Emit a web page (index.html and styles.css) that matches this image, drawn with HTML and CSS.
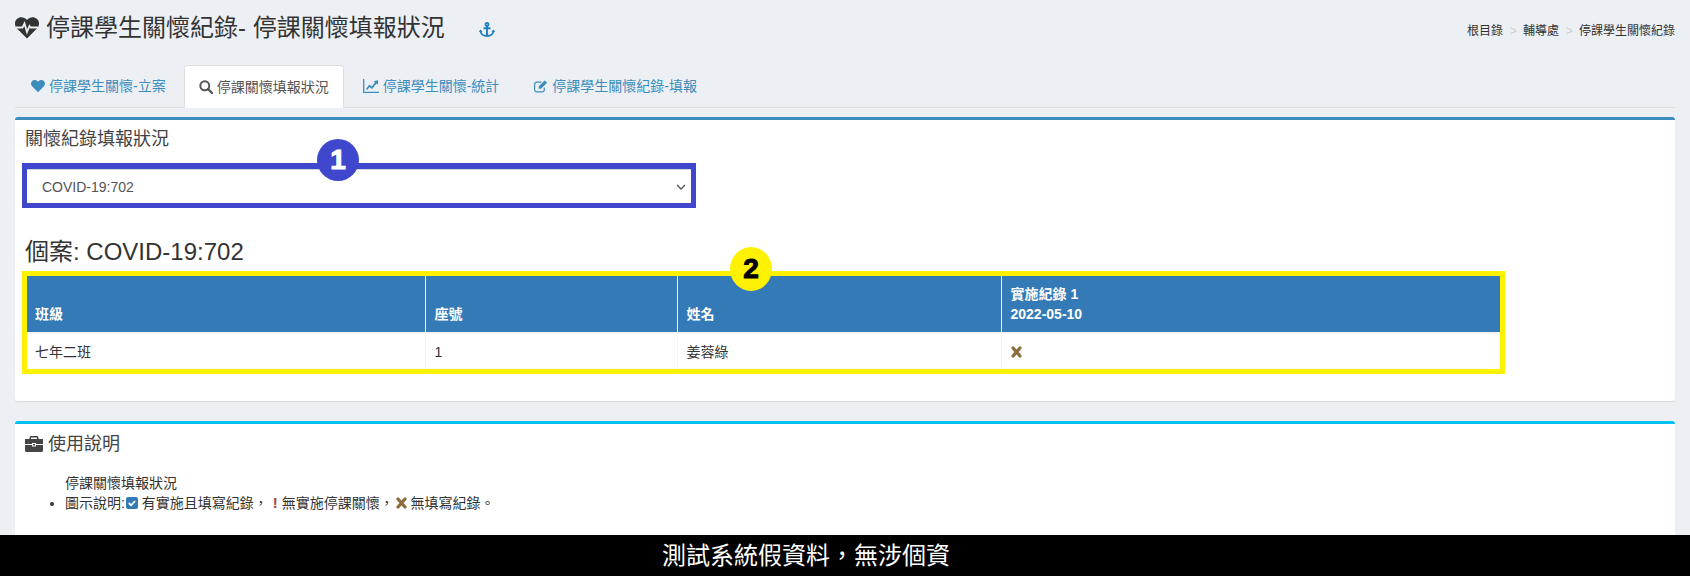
FILE: index.html
```html
<!DOCTYPE html>
<html lang="zh-Hant">
<head>
	<title>停課學生關懷紀錄</title>
	<link rel="stylesheet" href="styles.css">
</head>
<body>
	<div class="main">
		<div class="page-head">
			<h1 class="page-title">
				<svg class="icon-heartbeat" viewBox="0 0 24 22"><path fill="#333" d="M12 21.500 1.800 11.200C-.8 8.300-.5 4 2 1.900 4.700-.5 9.300-.3 12 3.100 14.700-.3 19.300-.5 22 1.900c2.500 2.100 2.800 6.400.2 9.300z"/><path fill="none" stroke="#ecf0f5" stroke-width="1.800" d="M1 10.500h6.500l2-4 2.500 8.500 2.500-6 1.200 1.500H23"/></svg>
				<span>停課學生關懷紀錄- 停課關懷填報狀況</span>
				<svg class="icon-anchor" viewBox="0 0 16 16"><g fill="none" stroke="#1f7fbd" stroke-width="1.900"><circle cx="8" cy="2.500" r="1.500"/><path d="M8 4v10.500M4.500 6.300h7M1.500 8.500c0 3.500 3 5.500 6.500 5.500s6.500-2 6.500-5.500"/></g><path fill="#1f7fbd" d="M0 10l1.500-2.500L3.500 10zM12.500 10l2-2.500L16 10z"/></svg>
			</h1>
			<ol class="crumbs">
				<li>根目錄</li>
				<li class="sep">&gt;</li>
				<li>輔導處</li>
				<li class="sep">&gt;</li>
				<li>停課學生關懷紀錄</li>
			</ol>
		</div>

		<ul class="tabs">
			<li class="tab">
				<svg class="tab-icon" viewBox="0 0 16 14"><path fill="currentColor" d="M8 14 1.200 7.300C-.5 5.400-.3 2.600 1.300 1.200 3.100-.4 6.200-.2 8 2 9.800-.2 12.900-.4 14.700 1.200c1.600 1.400 1.800 4.200.1 6.100z"/></svg>
				<span>停課學生關懷-立案</span>
			</li>
			<li class="tab active">
				<svg class="tab-icon" viewBox="0 0 14 14"><circle cx="5.800" cy="5.800" r="4.500" fill="none" stroke="currentColor" stroke-width="2"/><path d="M9 9l4 4" stroke="currentColor" stroke-width="2.400" stroke-linecap="round"/></svg>
				<span>停課關懷填報狀況</span>
			</li>
			<li class="tab">
				<svg class="tab-icon wide" viewBox="0 0 16 14"><path fill="none" stroke="currentColor" stroke-width="1.300" d="M.7 0v13.300H16"/><path fill="currentColor" d="M3 10l3.300-4.500 2.500 2 3.200-4-1.400-1.200 4.400-1v4.500l-1.400-1.200-4.600 5.400-2.500-2-2.200 3z"/></svg>
				<span>停課學生關懷-統計</span>
			</li>
			<li class="tab">
				<svg class="tab-icon" viewBox="0 0 15 14"><path fill="none" stroke="currentColor" stroke-width="1.300" d="M11 8.500v2.500a2.300 2.300 0 0 1-2.300 2.300H3A2.300 2.300 0 0 1 .7 11V5.200A2.300 2.300 0 0 1 3 2.900h5"/><path fill="currentColor" d="M5 7.500 11.500 1l2.500 2.500L7.500 10H5z"/></svg>
				<span>停課學生關懷紀錄-填報</span>
			</li>
		</ul>

		<section class="box box-primary">
			<h3 class="box-title">關懷紀錄填報狀況</h3>
			<div class="mark-blue">
				<select class="case-select">
					<option>COVID-19:702</option>
				</select>
				<svg class="select-arrow" viewBox="0 0 10 6"><path d="M1 1l4 4 4-4" fill="none" stroke="#555" stroke-width="1.300"/></svg>
				<span class="badge badge-blue">1</span>
			</div>
			<h3 class="case-title">個案: COVID-19:702</h3>
			<div class="mark-yellow">
				<table class="case-table">
					<colgroup>
						<col class="col-class">
						<col class="col-seat">
						<col class="col-name">
						<col>
					</colgroup>
					<thead>
						<tr>
							<th>班級</th>
							<th>座號</th>
							<th>姓名</th>
							<th>實施紀錄 1<br>2022-05-10</th>
						</tr>
					</thead>
					<tbody>
						<tr>
							<td>七年二班</td>
							<td>1</td>
							<td>姜蓉綠</td>
							<td><svg class="icon-times" viewBox="0 0 11 12"><path d="M2 2l7 8M9 2l-7 8" stroke="#8a6d3b" stroke-width="3.200" stroke-linecap="round"/></svg></td>
						</tr>
					</tbody>
				</table>
				<span class="badge badge-yellow">2</span>
			</div>
		</section>

		<section class="box box-info">
			<h3 class="box-title title-info">
				<svg class="icon-briefcase" viewBox="0 0 18 16"><path fill="#444" d="M6 0h6a1.500 1.500 0 0 1 1.500 1.500V3H18v5H11V7H7v1H0V3h4.500V1.500A1.500 1.500 0 0 1 6 0zm0 1.500V3h6V1.500zM0 9h7v1.500h4V9h7v5.500a1.500 1.500 0 0 1-1.500 1.500h-15A1.500 1.500 0 0 1 0 14.500z"/><path fill="#444" d="M8 8h2v1.500H8z"/></svg>
				使用說明
			</h3>
			<ul class="help-list">
				<li class="help-head">停課關懷填報狀況</li>
				<li>圖示說明:<svg class="icon-check" viewBox="0 0 12 12"><rect width="12" height="12" rx="2" fill="#337ab7"/><path d="M2.800 6l2.300 2.300 4-4.300" fill="none" stroke="#fff" stroke-width="1.800"/></svg> 有實施且填寫紀錄，<b class="mark-bang">!</b> 無實施停課關懷， <svg class="icon-times help-times" viewBox="0 0 11 12"><path d="M2 2l7 8M9 2l-7 8" stroke="#8a6d3b" stroke-width="3.200" stroke-linecap="round"/></svg> 無填寫紀錄。</li>
			</ul>
		</section>
	</div>
	<div class="notice">測試系統假資料，無涉個資</div>
</body>
</html>
```

FILE: styles.css
```css
* {
	box-sizing: border-box;
}
html, body {
	height: 100%;
	margin: 0;
}
body {
	display: flex;
	flex-direction: column;
	overflow: hidden;
	background-color: #ecf0f5;
	color: #333;
	font-family: "Liberation Sans", "Noto Sans CJK TC", sans-serif;
	font-size: 14px;
	line-height: 20px;
}
.main {
	flex: 1;
	min-height: 0;
	overflow: hidden;
	padding: 0 15px;
}

/* en-tete */
.page-head {
	display: flex;
	justify-content: space-between;
	height: 65px;
}
.page-title {
	display: flex;
	align-items: center;
	height: 30px;
	margin: 13px 0 0;
	font-size: 24px;
	font-weight: 400;
}
.icon-heartbeat {
	width: 24px;
	height: 22px;
	margin-right: 7px;
}
.icon-anchor {
	width: 16px;
	height: 16px;
	margin: 4px 0 0 34px;
}
.crumbs {
	display: flex;
	margin: 21px 0 0;
	padding: 0;
	list-style: none;
	font-size: 12px;
}
.crumbs .sep {
	padding: 0 6px 0 7px;
	color: #ccc;
}

/* onglets */
.tabs {
	display: flex;
	gap: 4px;
	height: 43px;
	margin: 0 0 9px;
	padding: 0 0 0 1px;
	border-bottom: 1px solid #ddd;
	list-style: none;
}
.tab {
	display: flex;
	align-items: center;
	height: 42px;
	padding: 0 15px;
	color: #3c8dbc;
}
.tab.active {
	height: 43px;
	margin-left: -1px;
	padding: 0 14px;
	border: 1px solid #ddd;
	border-bottom-color: #fff;
	border-radius: 4px 4px 0 0;
	background-color: #fff;
	color: #555;
}
.tab:last-child {
	margin-left: 1px;
}
.tab-icon {
	width: 14px;
	height: 14px;
	margin-right: 4px;
}
.tab-icon.wide {
	width: 16px;
}

/* boites */
.box {
	border-top: 3px solid #3c8dbc;
	border-radius: 3px;
	background-color: #fff;
	box-shadow: 0 1px 1px rgba(0, 0, 0, 0.1);
}
.box-primary {
	height: 284px;
	margin-bottom: 20px;
}
.box-info {
	height: 200px;
	border-top-color: #00c0ef;
}
.box-title {
	display: flex;
	align-items: center;
	margin: 0;
	padding: 10px 10px 9px;
	color: #444;
	font-size: 18px;
	font-weight: 400;
	line-height: 18px;
}
.title-info {
	padding-top: 11px;
}
.mark-blue {
	position: relative;
	width: 674px;
	height: 45px;
	margin: 6px 0 0 7px;
	border: 5px solid #3f48cc;
	border-top-width: 6px;
}
.case-select {
	display: block;
	width: 100%;
	height: 100%;
	padding: 0 15px;
	border: 0;
	border-top: 1px solid #d2d6de;
	border-radius: 0;
	background-color: #fff;
	color: #555;
	font-family: inherit;
	font-size: 14px;
	appearance: none;
}
.select-arrow {
	position: absolute;
	top: 15px;
	right: 5px;
	width: 10px;
	height: 6px;
}
.badge {
	position: absolute;
	display: flex;
	align-items: center;
	justify-content: center;
	width: 42px;
	height: 42px;
	border-radius: 50%;
	font-size: 28px;
	font-weight: 700;
	-webkit-text-stroke: 1px currentColor;
}
.badge-blue {
	top: -30px;
	left: 290px;
	background-color: #3f48cc;
	color: #fff;
}
.badge-yellow {
	top: -29px;
	left: 703px;
	height: 44px;
	background-color: #fff200;
	color: #000;
}
.case-title {
	margin: 30px 0 5px 10px;
	font-size: 24px;
	font-weight: 400;
	line-height: 28px;
}
.mark-yellow {
	position: relative;
	width: 1483px;
	height: 103px;
	margin-left: 7px;
	border: 5px solid #fff200;
}
.case-table {
	width: 1473px;
	border-collapse: collapse;
	table-layout: fixed;
}
.col-class {
	width: 398px;
}
.col-seat {
	width: 252px;
}
.col-name {
	width: 324px;
}
.case-table th {
	padding: 8px 8px 8px 9px;
	border-left: 1px solid #fff;
	background-color: #337ab7;
	color: #fff;
	text-align: left;
	vertical-align: bottom;
}
.case-table td {
	height: 36px;
	padding: 7px 8px 7px 9px;
	border-top: 2px solid #f4f4f4;
	border-left: 1px solid #f4f4f4;
}
.case-table th:first-child, .case-table td:first-child {
	padding-left: 8px;
	border-left: 0;
}
.icon-times {
	display: inline-block;
	width: 11px;
	height: 12px;
	vertical-align: -1px;
}
.help-times {
	margin-left: -2px;
}
.icon-briefcase {
	width: 18px;
	height: 16px;
	margin-right: 5px;
}

/* aide */
.help-list {
	margin: 0;
	padding: 11px 0 0 50px;
}
.help-head {
	list-style: none;
}
.icon-check {
	display: inline-block;
	width: 12px;
	height: 12px;
	margin-left: 1px;
	vertical-align: -1px;
}
.mark-bang {
	margin-left: 5px;
	color: #a94442;
	font-size: 15px;
}

/* bandeau */
.notice {
	flex: none;
	height: 41px;
	padding-left: 662px;
	background-color: #000;
	color: #fff;
	font-size: 24px;
	font-weight: 400;
	line-height: 41px;
}
```
